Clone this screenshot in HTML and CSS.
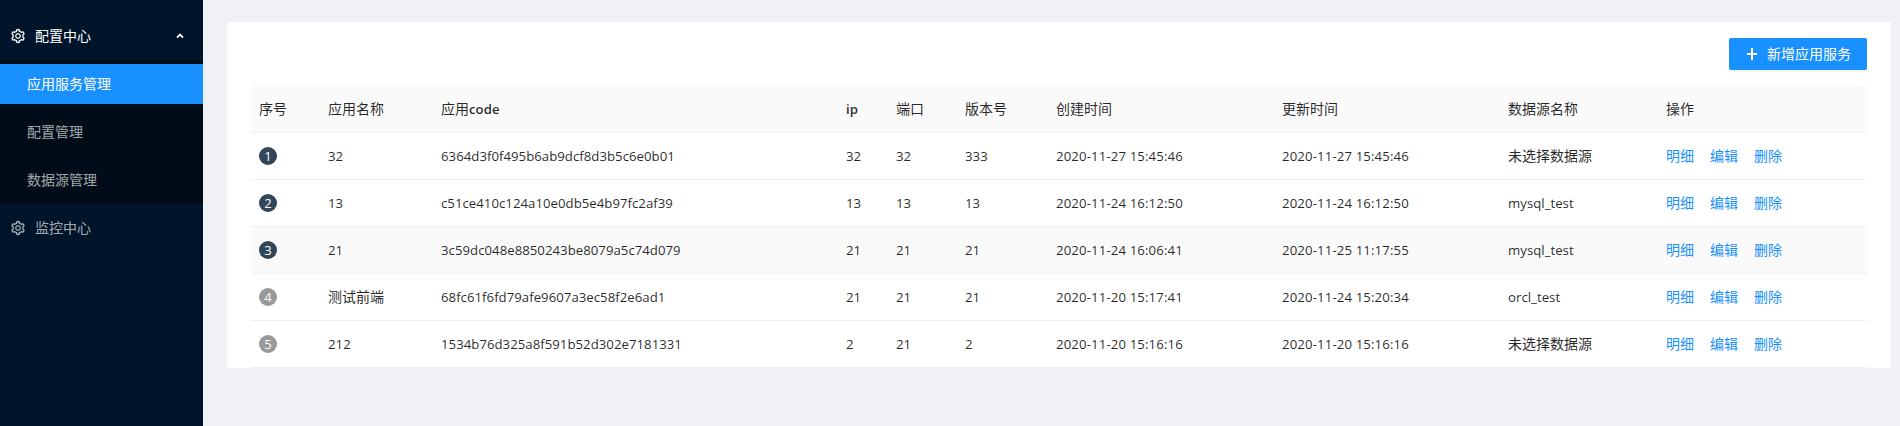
FILE: index.html
```html
<!DOCTYPE html>
<html lang="zh-CN">
<head>
<meta charset="utf-8">
<title>应用服务管理</title>
<link rel="stylesheet" href="styles.css">
</head>
<body>
<svg class="defs" width="0" height="0" aria-hidden="true">
  <symbol id="gear" viewBox="0 0 1024 1024">
    <path fill="currentColor" stroke="currentColor" stroke-width="14" d="M924.8 625.7l-65.5-56c3.1-19 4.700-38.400 4.700-57.800s-1.600-38.800-4.700-57.800l65.500-56a32.030 32.030 0 0 0 9.300-35.200l-.9-2.600a443.740 443.740 0 0 0-79.700-137.900l-1.800-2.100a32.120 32.120 0 0 0-35.100-9.500l-81.300 28.900c-30-24.600-63.500-44-99.700-57.600l-15.700-85a32.050 32.050 0 0 0-25.800-25.700l-2.700-.5c-52.100-9.400-106.900-9.400-159 0l-2.700.5a32.050 32.050 0 0 0-25.800 25.700l-15.800 85.400a351.860 351.860 0 0 0-99 57.400l-81.900-29.100a32 32 0 0 0-35.100 9.500l-1.800 2.100a446.020 446.020 0 0 0-79.700 137.900l-.9 2.600c-4.500 12.500-.8 26.500 9.300 35.200l66.300 56.600c-3.100 18.800-4.600 38-4.600 57.100 0 19.200 1.500 38.400 4.600 57.100L99 625.500a32.030 32.030 0 0 0-9.300 35.200l.9 2.600c18.100 50.400 44.900 96.900 79.700 137.900l1.800 2.100a32.120 32.120 0 0 0 35.100 9.500l81.900-29.100c29.800 24.500 63.100 43.900 99 57.400l15.800 85.400a32.050 32.050 0 0 0 25.800 25.700l2.700.5a449.400 449.400 0 0 0 159 0l2.700-.5a32.050 32.050 0 0 0 25.800-25.700l15.700-85a350 350 0 0 0 99.700-57.600l81.300 28.900a32 32 0 0 0 35.100-9.500l1.800-2.100c34.800-41.100 61.600-87.500 79.700-137.900l.9-2.600c4.500-12.300.8-26.300-9.300-35zM788.300 465.900c2.500 15.100 3.800 30.600 3.800 46.100s-1.300 31-3.800 46.100l-6.600 40.100 74.700 63.900a370.030 370.030 0 0 1-42.600 73.600L721 702.800l-31.400 25.800c-23.900 19.600-50.500 35-79.300 45.800l-38.100 14.300-17.900 97a377.500 377.500 0 0 1-85 0l-17.900-97.200-37.800-14.500c-28.500-10.800-55-26.200-78.700-45.700l-31.400-25.900-93.400 33.200c-17-22.900-31.200-47.600-42.600-73.600l75.500-64.500-6.500-40c-2.400-14.900-3.700-30.300-3.700-45.500 0-15.300 1.200-30.600 3.700-45.500l6.500-40-75.500-64.500c11.300-26.100 25.600-50.700 42.600-73.600l93.400 33.200 31.400-25.900c23.700-19.500 50.200-34.900 78.700-45.700l37.900-14.300 17.900-97.200c28.100-3.200 56.800-3.200 85 0l17.900 97 38.100 14.300c28.700 10.800 55.400 26.200 79.300 45.800l31.400 25.800 92.800-32.900c17 22.900 31.200 47.600 42.600 73.600L781.800 426l6.500 39.900zM512 336c-97.200 0-176 78.800-176 176s78.800 176 176 176 176-78.800 176-176-78.800-176-176-176zm79.200 255.200A111.600 111.600 0 0 1 512 624c-29.900 0-58-11.700-79.200-32.800A111.600 111.600 0 0 1 400 512c0-29.900 11.700-58 32.800-79.200C454 411.600 482.100 400 512 400c29.900 0 58 11.600 79.200 32.800A111.600 111.600 0 0 1 624 512c0 29.900-11.700 58-32.800 79.200z"/>
  </symbol>
</svg>
<div class="layout">
  <nav class="sidebar">
    <div class="menu-title open">
      <svg class="gear"><use href="#gear"/></svg><span>配置中心</span>
      <svg class="arrow" viewBox="0 0 8 6"><path d="M1 4.700L4 1.700L7 4.700" fill="none" stroke="currentColor" stroke-width="1.900"/></svg>
    </div>
    <div class="submenu">
      <a class="menu-item active">应用服务管理</a>
      <a class="menu-item">配置管理</a>
      <a class="menu-item">数据源管理</a>
    </div>
    <div class="menu-title"><svg class="gear"><use href="#gear"/></svg><span>监控中心</span></div>
  </nav>
  <main class="card">
    <div class="toolbar">
      <button class="add"><svg class="plus" viewBox="0 0 10 12"><path d="M5 0V12M0 6H10" stroke="currentColor" stroke-width="2"/></svg><span>新增应用服务</span></button>
    </div>
    <table class="table">
      <colgroup><col class="c-index"><col class="c-name"><col class="c-code"><col class="c-ip"><col class="c-port"><col class="c-version"><col class="c-time"><col class="c-time"><col class="c-source"><col></colgroup>
      <thead><tr><th>序号</th><th>应用名称</th><th>应用<span class="latin">code</span></th><th><span class="latin">ip</span></th><th>端口</th><th>版本号</th><th>创建时间</th><th>更新时间</th><th>数据源名称</th><th>操作</th></tr></thead>
      <tbody>
        <tr><td class="index"><span class="badge dark">1</span></td><td class="latin">32</td><td class="latin">6364d3f0f495b6ab9dcf8d3b5c6e0b01</td><td class="latin">32</td><td class="latin">32</td><td class="latin">333</td><td class="latin time">2020-11-27 15:45:46</td><td class="latin time">2020-11-27 15:45:46</td><td>未选择数据源</td><td><div class="actions"><a>明细</a><a>编辑</a><a>删除</a></div></td></tr>
        <tr><td class="index"><span class="badge dark">2</span></td><td class="latin">13</td><td class="latin">c51ce410c124a10e0db5e4b97fc2af39</td><td class="latin">13</td><td class="latin">13</td><td class="latin">13</td><td class="latin time">2020-11-24 16:12:50</td><td class="latin time">2020-11-24 16:12:50</td><td class="latin">mysql_test</td><td><div class="actions"><a>明细</a><a>编辑</a><a>删除</a></div></td></tr>
        <tr class="hover"><td class="index"><span class="badge dark">3</span></td><td class="latin">21</td><td class="latin">3c59dc048e8850243be8079a5c74d079</td><td class="latin">21</td><td class="latin">21</td><td class="latin">21</td><td class="latin time">2020-11-24 16:06:41</td><td class="latin time">2020-11-25 11:17:55</td><td class="latin">mysql_test</td><td><div class="actions"><a>明细</a><a>编辑</a><a>删除</a></div></td></tr>
        <tr><td class="index"><span class="badge">4</span></td><td>测试前端</td><td class="latin">68fc61f6fd79afe9607a3ec58f2e6ad1</td><td class="latin">21</td><td class="latin">21</td><td class="latin">21</td><td class="latin time">2020-11-20 15:17:41</td><td class="latin time">2020-11-24 15:20:34</td><td class="latin">orcl_test</td><td><div class="actions"><a>明细</a><a>编辑</a><a>删除</a></div></td></tr>
        <tr><td class="index"><span class="badge">5</span></td><td class="latin">212</td><td class="latin">1534b76d325a8f591b52d302e7181331</td><td class="latin">2</td><td class="latin">21</td><td class="latin">2</td><td class="latin time">2020-11-20 15:16:16</td><td class="latin time">2020-11-20 15:16:16</td><td>未选择数据源</td><td><div class="actions"><a>明细</a><a>编辑</a><a>删除</a></div></td></tr>
      </tbody>
    </table>
  </main>
</div>
</body>
</html>
```
FILE: styles.css
```css
* { box-sizing: border-box; }
body {
  margin: 0;
  background: #f0f1f5;
  color: rgba(0, 0, 0, 0.85);
  font: 14px/22px "Noto Sans CJK SC", sans-serif;
}
.defs { position: absolute; }
.layout { display: flex; align-items: flex-start; height: 426px; overflow: hidden; }
.sidebar {
  width: 203px;
  height: 426px;
  padding-top: 12px;
  background: #001529;
  color: rgba(255, 255, 255, 0.65);
}
.menu-title { display: flex; align-items: center; height: 48px; padding: 0 19px 0 10px; }
.menu-title span { padding-bottom: 2px; }
.menu-title.open { color: #fff; }
.gear { width: 16px; height: 16px; margin-right: 9px; }
.arrow { width: 8px; height: 6px; margin-left: auto; }
.submenu {
  display: flex;
  flex-direction: column;
  gap: 8px;
  padding: 4px 0;
  background: #000c17;
}
.menu-item { height: 40px; padding-left: 27px; line-height: 38px; }
.menu-item.active { background: #1890ff; color: #fff; }
.card {
  width: 1664px;
  height: 346px;
  margin: 22px 0 0 24px;
  padding: 16px 24px 0;
  background: #fff;
  border-radius: 2px;
}
.toolbar { display: flex; justify-content: flex-end; margin-bottom: 16px; }
.add {
  display: flex;
  align-items: center;
  width: 138px;
  height: 32px;
  padding: 0 0 0 18px;
  border: 0;
  border-radius: 2px;
  background: #1890ff;
  box-shadow: 0 2px 0 rgba(0, 0, 0, 0.045);
  color: #fff;
  font: inherit;
}
.add span { padding-bottom: 2px; }
.plus { width: 10px; height: 12px; margin-right: 10px; }
.table { width: 1616px; table-layout: fixed; border-collapse: separate; border-spacing: 0; }
.c-index { width: 69px; }
.c-name { width: 113px; }
.c-code { width: 405px; }
.c-ip { width: 50px; }
.c-port { width: 69px; }
.c-version { width: 91px; }
.c-time { width: 226px; }
.c-source { width: 158px; }
th, td {
  height: 47px;
  padding: 0 8px 2px;
  border-bottom: 1px solid #f0f0f0;
  text-align: left;
  vertical-align: middle;
  white-space: nowrap;
}
td.latin, td.index { padding-bottom: 0; }
th { background: #fafafa; font-weight: 400; }
th:first-child { border-top-left-radius: 2px; }
th:last-child { border-top-right-radius: 2px; }
.hover td { background: #fafafa; }
.latin { font-family: "Open Sans", "Noto Sans", sans-serif; font-size: 13.2px; letter-spacing: 0.03px; }
th .latin { font-weight: 600; }
.time { letter-spacing: 0.13px; }
.badge {
  display: block;
  width: 18px;
  height: 18px;
  border-radius: 50%;
  background: #999;
  color: #fff;
  font: 13px/18px "Open Sans", sans-serif;
  text-align: center;
}
.badge.dark { background: #314659; }
.actions { display: flex; gap: 16px; color: #1890ff; }
```
